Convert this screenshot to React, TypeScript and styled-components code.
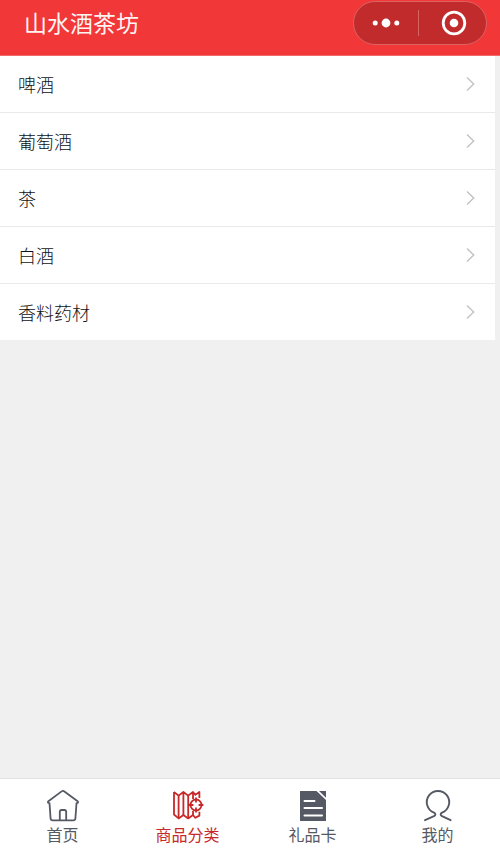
import React, { useState } from "react";
import styled, { createGlobalStyle } from "styled-components";

const GlobalStyle = createGlobalStyle`
  * { box-sizing: border-box; }
  body {
    margin: 0;
    background: #f0f0f0;
    font-family: "Noto Sans CJK SC", sans-serif;
  }
`;

const Page = styled.div`
  display: flex;
  flex-direction: column;
  min-height: 100vh;
`;

const Header = styled.header`
  display: flex;
  align-items: flex-start;
  justify-content: space-between;
  padding: 1px 13px 10px 24px;
  border-bottom: 1px solid #f26a6a;
  background: #f13738;
`;

const Title = styled.h1`
  margin: 0;
  color: #fff4f2;
  font-family: "KaiTi", "STKaiti", "Noto Sans CJK SC", sans-serif;
  font-size: 23px;
  font-weight: 400;
  line-height: 42px;
`;

const Capsule = styled.div`
  display: flex;
  align-items: center;
  width: 134px;
  height: 44px;
  border: 1px solid #dc6263;
  border-radius: 22px;
  background: #c22b2c;
`;

const CapsuleButton = styled.button`
  display: flex;
  flex: 1;
  align-items: center;
  justify-content: center;
  height: 100%;
  padding: 0;
  border: 0;
  background: none;

  &:last-child { padding-left: 4px; }
`;

const CapsuleDivider = styled.span`
  width: 1px;
  height: 26px;
  background: #d76464;
`;

const Main = styled.main`
  flex: 1;
  padding-right: 5px;
`;

const List = styled.ul`
  margin: 0;
  padding: 0;
  list-style: none;
  background: #fff;
`;

const ListItem = styled.li`
  & + & { border-top: 1px solid #e9e9e9; }
`;

const RowLink = styled.a`
  display: flex;
  align-items: center;
  justify-content: space-between;
  height: 56px;
  padding: 0 20px 0 18px;
  color: #111;
  font-size: 18px;
  font-weight: 300;
  line-height: 24px;
  text-decoration: none;
`;

const TabBar = styled.nav`
  position: sticky;
  bottom: 0;
  display: grid;
  grid-template-columns: repeat(4, 1fr);
  border-top: 1px solid #e2e2e2;
  background: #fff;
`;

const Tab = styled.button<{ $active: boolean }>`
  display: flex;
  flex-direction: column;
  align-items: center;
  gap: 1px;
  padding: 10px 0 9px;
  border: 0;
  background: none;
  color: ${(p) => (p.$active ? "#c7292b" : "#555963")};
  font-family: "KaiTi", "STKaiti", "Noto Sans CJK SC", sans-serif;
  font-size: 16px;
  line-height: 20px;
`;

const Chevron = () => (
  <svg width="9" height="16" viewBox="0 0 9 16" fill="none" stroke="#c2c2c2" strokeWidth="1.4" aria-hidden="true">
    <path d="M1 1.5 7.7 8 1 14.5" />
  </svg>
);

const DotsIcon = () => (
  <svg width="28" height="10" viewBox="0 0 28 10" fill="#fff" aria-hidden="true">
    <circle cx="3.2" cy="5" r="2.5" />
    <circle cx="14" cy="5" r="4.4" />
    <circle cx="24.8" cy="5" r="2.5" />
  </svg>
);

const TargetIcon = () => (
  <svg width="26" height="26" viewBox="0 0 26 26" fill="none" aria-hidden="true">
    <circle cx="13" cy="13" r="10.8" stroke="#fff" strokeWidth="2.8" />
    <circle cx="13" cy="13" r="4.3" fill="#fff" />
  </svg>
);

const iconProps = {
  width: 34,
  height: 34,
  viewBox: "0 0 34 34",
  fill: "none",
  stroke: "currentColor",
  "aria-hidden": true,
} as const;

const HomeIcon = () => (
  <svg {...iconProps} strokeWidth="1.8" strokeLinejoin="round" strokeLinecap="round">
    <path d="M3.5 14.2 Q1 13.8 2.4 12.2 L15.6 2.4 Q17 1.4 18.4 2.4 L31.6 12.2 Q33 13.8 30.5 14.2 L29.4 29.5 Q29.2 31.3 27.2 31.3 H6.8 Q4.8 31.3 4.6 29.5 Z" />
    <path d="M13.8 31 V23 Q13.8 21 15.6 21 H18.4 Q20.2 21 20.2 23 V31" />
  </svg>
);

const MapIcon = () => (
  <svg {...iconProps} strokeWidth="1.8" strokeLinejoin="round">
    <path d="M3 3 7.6 6.6 12.4 3 17.2 6.6 22 3 24.4 5.8 28.4 3 V9" />
    <path d="M3 3 V25.5 L7.6 29.4 12.4 26 17.2 29.4 22 26 24.4 28.8 28.4 26.6 V22.8" />
    <path d="M7.6 6.6 V29 M12.4 3 V26 M17.2 6.6 V29 M22 3 V10 M22 22 V26" />
    <circle cx="25" cy="16" r="5.5" />
    <path d="M25 8.6 V13.4 M25 18.6 V23.4 M17.6 16 H22.4 M27.6 16 H32.4" />
  </svg>
);

const CardIcon = () => (
  <svg {...iconProps}>
    <path d="M4 2 H20.5 L30 11 V32 H4 Z" fill="currentColor" stroke="none" />
    <path d="M23 2 H30 V8.8 Z" fill="currentColor" stroke="none" />
    <path d="M8.5 12 H18.5 M8.5 19 H26 M8.5 26.4 H26" stroke="#fff" strokeWidth="2" strokeLinecap="round" />
  </svg>
);

const UserIcon = () => (
  <svg {...iconProps} strokeWidth="1.9" strokeLinejoin="round" strokeLinecap="round">
    <path d="M4 31.2 13 27.2 Q15.8 25.4 13 23.6 A11.2 11.2 0 1 1 21 23.6 Q18.2 25.4 21 27.2 L29.6 31.2" />
  </svg>
);

const categories = ["啤酒", "葡萄酒", "茶", "白酒", "香料药材"];

const tabs = [
  { label: "首页", Icon: HomeIcon },
  { label: "商品分类", Icon: MapIcon },
  { label: "礼品卡", Icon: CardIcon },
  { label: "我的", Icon: UserIcon },
];

export default function App() {
  const [active, setActive] = useState("商品分类");
  return (
    <>
      <GlobalStyle />
      <Page>
        <Header>
          <Title>山水酒茶坊</Title>
          <Capsule>
            <CapsuleButton type="button" aria-label="更多">
              <DotsIcon />
            </CapsuleButton>
            <CapsuleDivider />
            <CapsuleButton type="button" aria-label="关闭">
              <TargetIcon />
            </CapsuleButton>
          </Capsule>
        </Header>
        <Main>
          <List>
            {categories.map((name) => (
              <ListItem key={name}>
                <RowLink href="#">
                  {name}
                  <Chevron />
                </RowLink>
              </ListItem>
            ))}
          </List>
        </Main>
        <TabBar>
          {tabs.map(({ label, Icon }) => (
            <Tab
              key={label}
              type="button"
              $active={label === active}
              aria-current={label === active ? "page" : undefined}
              onClick={() => setActive(label)}
            >
              <Icon />
              {label}
            </Tab>
          ))}
        </TabBar>
      </Page>
    </>
  );
}
